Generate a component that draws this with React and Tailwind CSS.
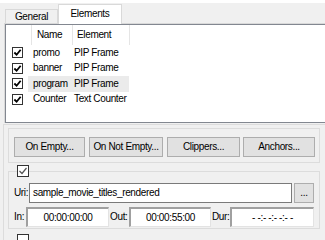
import React from 'react';

const ROWS = [
  { name: 'promo', element: 'PIP Frame' },
  { name: 'banner', element: 'PIP Frame' },
  { name: 'program', element: 'PIP Frame', hot: true },
  { name: 'Counter', element: 'Text Counter' },
];

function Check({ size = 11, bold = true, checked = true }) {
  return (
    <div
      className="flex shrink-0 items-center justify-center border border-[#333333] bg-white"
      style={{ width: size, height: size }}
    >
      {checked ? (
        <svg width={size - 2} height={size - 2} viewBox="0 0 10 10">
          <polyline
            points="1.5,5 4,7.5 8.5,2"
            fill="none"
            stroke={bold ? '#000' : '#555'}
            strokeWidth={bold ? 2 : 1.2}
          />
        </svg>
      ) : null}
    </div>
  );
}

function Btn({ w, children, className = '' }) {
  return (
    <div
      className={`flex h-[20px] shrink-0 items-center justify-center border border-[#adadad] bg-[#e1e1e1] ${className}`}
      style={{ width: w }}
    >
      {children}
    </div>
  );
}

function Sunken({ w, children }) {
  return (
    <div
      className="flex h-[20px] shrink-0 items-center justify-center border-t-2 border-l-2 border-r border-b border-t-[#a0a0a0] border-l-[#a0a0a0] border-r-[#e3e3e3] border-b-[#e3e3e3] bg-white"
      style={{ width: w }}
    >
      {children}
    </div>
  );
}

export default function App() {
  return (
    <div className="h-[240px] w-[325px] overflow-hidden bg-[#f0f0f0] font-['Liberation_Sans',Arial,sans-serif] text-[10px] leading-[12px] tracking-[-0.35px] text-black">
      <div className="h-[3px] bg-white" />

      {/* tabs */}
      <div className="relative flex h-[20px] items-end pl-[5px]">
        <div className="flex h-[14px] w-[53px] items-center justify-center border border-b-0 border-[#d9d9d9] bg-[#f0f0f0]">
          General
        </div>
        <div className="relative z-10 -mb-px flex h-[20px] w-[64px] justify-center border border-b-0 border-[#d9d9d9] bg-white pt-[3px]">
          Elements
        </div>
      </div>

      {/* tab page with list */}
      <div className="ml-[4px] h-[100px] border-t border-l border-[#d9d9d9] bg-white">
        <div className="h-[99px] border-t border-l border-b border-[#828790]">
          <div className="flex h-[20px]">
            <div className="w-[26px] border-r border-[#e5e5e5]" />
            <div className="flex w-[41px] items-center border-r border-[#e5e5e5] pl-[5px]">Name</div>
            <div className="flex w-[57px] items-center border-r border-[#e5e5e5] pl-[4px]">Element</div>
          </div>
          {ROWS.map((r) => (
            <div key={r.name} className="flex h-[15.5px] items-center">
              <div className="w-[22px] pl-[6px]">
                <Check />
              </div>
              <div className={`flex h-full w-[101px] items-center ${r.hot ? 'bg-[#ebebeb]' : ''}`}>
                <div className="w-[46px] pl-[5px]">{r.name}</div>
                <div>{r.element}</div>
              </div>
            </div>
          ))}
        </div>
      </div>

      {/* bottom pane */}
      <div className="mt-[1px] ml-[3px] h-[116px] border-t border-l border-[#dcdcdc]">
        <div className="mt-[3px] ml-[4px] h-[35px] w-[312px] border border-[#dcdcdc] pt-[8px] pl-[5px]">
          <div className="flex">
            <Btn w={71}>On Empty...</Btn>
            <Btn w={74} className="ml-[4px]">On Not Empty...</Btn>
            <Btn w={73} className="ml-[4px]">Clippers...</Btn>
            <Btn w={72} className="ml-[3px]">Anchors...</Btn>
          </div>
        </div>

        <div className="relative mt-[8px] ml-[4px] h-[58px] w-[312px] border border-[#dcdcdc] pt-[11px] pl-[5px]">
          <div className="absolute top-[-7px] left-[8px] bg-[#f0f0f0]">
            <Check size={12} bold={false} />
          </div>
          <div className="flex items-center">
            <div className="w-[15px]">Uri:</div>
            <div className="flex h-[20px] w-[263px] items-center border border-[#7a7a7a] bg-white pl-[3px]">
              sample_movie_titles_rendered
            </div>
            <Btn w={20} className="ml-[2px]">...</Btn>
          </div>
          <div className="mt-[4px] flex items-center">
            <div className="w-[12px]">In:</div>
            <Sunken w={83}>00:00:00:00</Sunken>
            <div className="ml-[1px] w-[19px]">Out:</div>
            <Sunken w={82}>00:00:55:00</Sunken>
            <div className="ml-[1px] w-[18px]">Dur:</div>
            <Sunken w={84}>- -:- -:- -:- -</Sunken>
          </div>
        </div>

        <div className="mt-[5px] ml-[13px]">
          <Check size={12} checked={false} />
        </div>
      </div>
    </div>
  );
}
